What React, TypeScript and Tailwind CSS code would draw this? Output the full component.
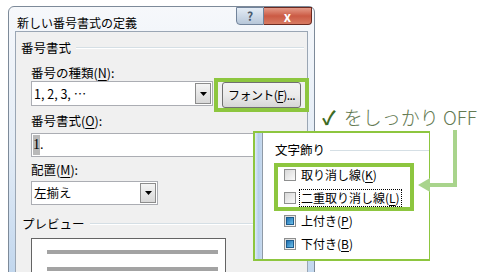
import React from 'react';

const jp = { fontFamily: '"Noto Sans CJK JP", "Noto Sans", sans-serif' };

function U({ children }: { children: React.ReactNode }) {
  return <span className="underline underline-offset-2">{children}</span>;
}

function DropButton() {
  return (
    <div className="w-[16px] self-stretch m-[1px] border border-[#8c8c8c] bg-gradient-to-b from-[#f4f4f4] to-[#d8d8d8] flex items-center justify-center">
      <svg width="7" height="4" viewBox="0 0 7 4">
        <polygon points="0,0 7,0 3.5,4" fill="#000" />
      </svg>
    </div>
  );
}

function Checkbox({ checked }: { checked?: boolean }) {
  return (
    <div className="w-[12px] h-[12px] border border-[#8e8f8f] bg-gradient-to-br from-[#d8d8d8] to-[#fbfbfb] flex items-center justify-center shrink-0">
      {checked && (
        <div className="w-[8px] h-[8px] border border-[#1d5b8c] bg-gradient-to-br from-[#1d6fb0] to-[#6cc0ea]" />
      )}
    </div>
  );
}

export default function App() {
  return (
    <div className="relative w-[485px] h-[272px] overflow-hidden bg-white text-black" style={jp}>
      {/* main dialog */}
      <div className="ml-[8px] mt-[6px] w-[307px] h-[290px] border border-[#7d8a99] rounded-t-[6px] bg-gradient-to-b from-[#f6f8fb] via-[#e3ecf6] to-[#bcd3ec] flex flex-col">
        <div className="h-[28px] flex items-start">
          <div className="flex-1 pl-[8px] pt-[8px] text-[12px] leading-[16px]">新しい番号書式の定義</div>
          <div className="flex mr-[2px]">
            <div className="w-[28px] h-[18px] border border-[#71839a] rounded-bl-[4px] bg-gradient-to-b from-[#e4ecf5] to-[#b7c7d9] flex items-center justify-center text-[12px] font-bold text-[#4a5a6c] leading-none">
              ?
            </div>
            <div className="w-[48px] h-[18px] border border-l-0 border-[#6b2a20] rounded-br-[4px] bg-gradient-to-b from-[#e49a88] via-[#cb5a44] to-[#d77a62] flex items-center justify-center text-[13px] font-bold text-white leading-none">
              x
            </div>
          </div>
        </div>

        <div className="ml-[6px] mr-[6px] flex-1 border border-b-0 border-[#9aa6b4] bg-[#f0f0f0] flex flex-col text-[12.5px] leading-[16px]">
          {/* 番号書式 */}
          <div className="mt-[8px] pl-[5px] flex items-center">
            <span>番号書式</span>
            <div className="flex-1 ml-[5px] mr-[3px] border-t border-[#d5dfe5] border-b border-b-white" />
          </div>
          <div className="mt-[9px] pl-[15px]">
            番号の種類(<U>N</U>):
          </div>
          <div className="pl-[15px] flex items-start">
            <div className="w-[182px] h-[25px] border border-[#abadb3] bg-white flex">
              <div className="flex-1 pl-[2px] flex items-center">1, 2, 3, …</div>
              <DropButton />
            </div>
            <div className="relative ml-[9px] mt-[1px]">
              <div className="w-[79px] h-[26px] rounded-[3px] border border-[#707070] bg-gradient-to-b from-[#f3f3f3] via-[#ebebeb] to-[#d6d6d6] flex items-center justify-center text-[12px] tracking-[-0.6px]">
                フォント(<U>F</U>)...
              </div>
              <div className="absolute -left-[8px] -right-[8px] -top-[4px] -bottom-[4px] border-4 border-[#8dc63f]" />
            </div>
          </div>
          <div className="mt-[5px] pl-[15px]">
            番号書式(<U>O</U>):
          </div>
          <div className="mt-[4px] pl-[15px]">
            <div className="w-[270px] h-[24px] border border-[#abadb3] bg-white flex items-stretch p-[1px]">
              <span className="bg-[#b9b9b9] flex items-center text-[14px]" style={{ fontFamily: '"Liberation Serif", serif' }}>
                1
              </span>
              <span className="flex items-center text-[14px]" style={{ fontFamily: '"Liberation Serif", serif' }}>
                .
              </span>
            </div>
          </div>
          <div className="mt-[5px] pl-[15px]">
            配置(<U>M</U>):
          </div>
          <div className="mt-[3px] pl-[15px]">
            <div className="w-[127px] h-[24px] border border-[#abadb3] bg-white flex">
              <div className="flex-1 pl-[2px] flex items-center">左揃え</div>
              <DropButton />
            </div>
          </div>
          {/* プレビュー */}
          <div className="mt-[11px] pl-[6px] flex items-center">
            <span>プレビュー</span>
            <div className="flex-1 ml-[5px] mr-[3px] border-t border-[#d5dfe5] border-b border-b-white" />
          </div>
          <div className="mt-[6px] pl-[15px]">
            <div className="w-[195px] h-[60px] border border-[#646464] bg-white pt-[11px] pl-[15px] flex flex-col gap-[13px]">
              <div className="w-[171px] h-[4px] bg-[#a3a3a3]" />
              <div className="w-[171px] h-[4px] bg-[#a3a3a3]" />
            </div>
          </div>
        </div>
      </div>

      {/* font dialog excerpt */}
      <div className="absolute left-[253px] top-[131px] w-[177px] h-[130px] border-2 border-r border-[#8dc63f] bg-white flex">
        <div className="w-[8px] h-full bg-gradient-to-r from-[#dfeaf7] via-[#b6cfeb] to-[#c9dbef] border-r border-[#8f9aa6]" />
        <div className="flex-1 flex flex-col text-[12px] leading-[16px]">
          <div className="mt-[9px] pl-[12px] flex items-center text-[12.5px]">
            <span>文字飾り</span>
            <div className="flex-1 ml-[5px] border-t border-[#d5dfe5]" />
          </div>
          <div className="relative mt-[5px] ml-[11px] w-[140px]">
            <div className="h-[23px] pl-[10px] flex items-center gap-[5px]">
              <Checkbox />
              <span>取り消し線(<U>K</U>)</span>
            </div>
            <div className="h-[23px] pl-[10px] flex items-center gap-[3px]">
              <Checkbox />
              <span className="border border-dotted border-black px-[1px]">二重取り消し線(<U>L</U>)</span>
            </div>
            <div className="absolute left-0 right-0 top-0 -bottom-[2px] border-4 border-[#8dc63f]" />
          </div>
          <div className="ml-[11px] h-[23px] pl-[10px] flex items-center gap-[5px]">
            <Checkbox checked />
            <span>上付き(<U>P</U>)</span>
          </div>
          <div className="ml-[11px] h-[23px] pl-[10px] flex items-center gap-[5px]">
            <Checkbox checked />
            <span>下付き(<U>B</U>)</span>
          </div>
        </div>
      </div>

      {/* annotation */}
      <div className="absolute left-[322px] top-[105px] flex items-center text-[19px] leading-[24px]">
        <span className="text-[#3d6b25] font-bold mr-[8px]">✓</span>
        <span className="text-[#647a52] font-light">をしっかり OFF</span>
      </div>
      <svg className="absolute left-[414px] top-[128px]" width="48" height="70" viewBox="0 0 48 70">
        <polyline points="41,2 41,57 14,57" fill="none" stroke="#a9d48c" strokeWidth="4" />
        <polygon points="4,57 16,50 16,64" fill="#a9d48c" />
      </svg>
    </div>
  );
}
